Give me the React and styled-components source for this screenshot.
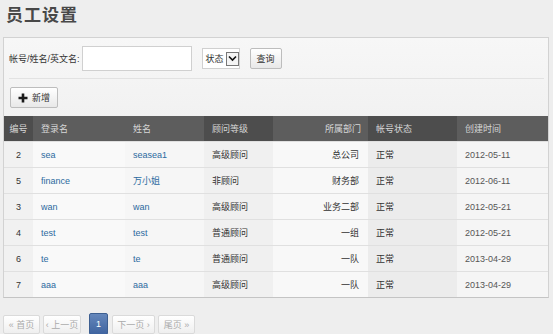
import React from 'react'
import styled, { createGlobalStyle } from 'styled-components'

const GlobalStyle = createGlobalStyle`
    body {
        margin: 0;
        background: #eeeeee;
        font-family: "Liberation Sans", "Noto Sans CJK SC", sans-serif;
        color: #333;
    }
`

const Page = styled.div`
    width: 553px;
    height: 334px;
    overflow: hidden;
`
const Title = styled.h1`
    margin: 0;
    height: 37px;
    box-sizing: border-box;
    padding: 3px 0 0 6px;
    font-family: "Noto Sans CJK SC", serif;
    font-size: 17px;
    line-height: 22px;
    font-weight: 700;
    letter-spacing: 1px;
    color: #484848;
`
const Panel = styled.div`
    margin-left: 3px;
    width: 546px;
    box-sizing: border-box;
    border: 1px solid #d2d2d2;
    border-bottom-color: #c4c4c4;
    background: linear-gradient(#f7f7f7, #f1f1f1 80px);
`
const SearchRow = styled.div`
    display: flex;
    align-items: center;
    margin: 0 4px 0 5px;
    padding: 8px 0 7px;
    border-bottom: 1px solid #e2e2e2;
`
const Label = styled.span`
    font-size: 9px;
    color: #333;
    margin-right: 2px;
    white-space: nowrap;
`
const TextInput = styled.input`
    width: 110px;
    height: 25px;
    box-sizing: border-box;
    border: 1px solid #d0d0d0;
    background: #fff;
    margin-right: 10px;
    padding: 0 4px;
`
const FakeSelect = styled.div`
    display: flex;
    align-items: center;
    width: 38px;
    height: 21px;
    box-sizing: border-box;
    border: 1px solid #d0d0d0;
    background: #fff;
    padding-left: 3px;
    font-size: 9px;
    white-space: nowrap;
    margin-right: 10px;
`
const Arrow = styled.span`
    display: flex;
    align-items: center;
    justify-content: center;
    flex: none;
    width: 13px;
    height: 14px;
    box-sizing: border-box;
    border: 1px solid #777;
    margin-left: 2px;
    background: #f4f4f4;
`
const Button = styled.button`
    display: inline-flex;
    align-items: center;
    gap: 4px;
    height: 21px;
    box-sizing: border-box;
    padding: 0 ${(p) => p.$pad || 6}px;
    border: 1px solid #bdbdbd;
    border-radius: 2px;
    background: linear-gradient(#ffffff, #e8e8e8);
    font-family: "Liberation Sans", "Noto Sans CJK SC", sans-serif;
    font-size: 9px;
    color: #333;
    cursor: pointer;
`
const Toolbar = styled.div`
    padding: 8px 6px;
    display: flex;
`
const Table = styled.table`
    width: 544px;
    border-collapse: collapse;
    table-layout: fixed;
    font-size: 9px;
`
const Th = styled.th`
    height: 25px;
    padding: 0 ${(p) => (p.$align === 'right' ? '7px' : '0')} 0 ${(p) => (p.$align === 'center' ? '0' : '8px')};
    text-align: ${(p) => p.$align || 'left'};
    font-weight: normal;
    color: #d6d6d6;
    background: ${(p) => (p.$dark ? '#4d4d4d' : '#5d5d5d')};
    font-size: 9px;
`
const Td = styled.td`
    height: 25px;
    padding: 0 ${(p) => (p.$align === 'right' ? '9px' : '0')} 0 ${(p) => (p.$align === 'center' ? '0' : '8px')};
    text-align: ${(p) => p.$align || 'left'};
    border-top: 1px solid #e0e0e0;
    background: ${(p) => p.$bg || '#f8f8f8'};
    color: ${(p) => (p.$muted ? '#555' : '#333')};
    white-space: nowrap;
`
const Link = styled.a`
    color: #2c6aa0;
    text-decoration: none;
    font-size: 9px;
`
const Pager = styled.div`
    display: flex;
    align-items: center;
    gap: 3px;
    padding: 15px 0 0 3px;
`
const PageBtn = styled.span`
    display: inline-flex;
    align-items: center;
    justify-content: center;
    box-sizing: border-box;
    width: ${(p) => p.$w}px;
    height: ${(p) => (p.$active ? 22 : 19)}px;
    margin-left: ${(p) => p.$ml || 0}px;
    border: 1px solid ${(p) => (p.$active ? '#3d5f91' : '#dadada')};
    border-radius: 2px;
    background: ${(p) => (p.$active ? 'linear-gradient(#6587bb, #3f64a0)' : 'linear-gradient(#ffffff, #efefef)')};
    color: ${(p) => (p.$active ? '#fff' : '#aaa')};
    font-size: 9px;
`

const columns = [
    { title: '编号', w: 29, align: 'center', dark: true, bg: '#f1f1f1' },
    { title: '登录名', w: 92, bg: '#f9f9f9' },
    { title: '姓名', w: 79, bg: '#f6f6f6' },
    { title: '顾问等级', w: 69, dark: true, bg: '#f0f0f0' },
    { title: '所属部门', w: 95, align: 'right', bg: '#f8f8f8' },
    { title: '帐号状态', w: 89, dark: true, bg: '#ececec' },
    { title: '创建时间', w: 91, bg: '#f5f5f5' },
]

const rows = [
    ['2', 'sea', 'seasea1', '高级顾问', '总公司', '正常', '2012-05-11'],
    ['5', 'finance', '万小姐', '非顾问', '财务部', '正常', '2012-06-11'],
    ['3', 'wan', 'wan', '高级顾问', '业务二部', '正常', '2012-05-21'],
    ['4', 'test', 'test', '普通顾问', '一组', '正常', '2012-05-21'],
    ['6', 'te', 'te', '普通顾问', '一队', '正常', '2013-04-29'],
    ['7', 'aaa', 'aaa', '高级顾问', '一队', '正常', '2013-04-29'],
]

const App = () => {
    return (
        <Page>
            <GlobalStyle />
            <Title>员工设置</Title>
            <Panel>
                <SearchRow>
                    <Label>帐号/姓名/英文名:</Label>
                    <TextInput />
                    <FakeSelect>
                        状态
                        <Arrow>
                            <svg width="9" height="7" viewBox="0 0 9 7">
                                <path d="M1 1.5 L4.5 5 L8 1.5" fill="none" stroke="#111" strokeWidth="1.6" />
                            </svg>
                        </Arrow>
                    </FakeSelect>
                    <Button $pad={6}>查询</Button>
                </SearchRow>
                <Toolbar>
                    <Button $pad={7}>
                        <svg width="10" height="10" viewBox="0 0 10 10">
                            <path d="M5 0.5 V9.5 M0.5 5 H9.5" stroke="#1a1a1a" strokeWidth="2.6" />
                        </svg>
                        新增
                    </Button>
                </Toolbar>
                <Table>
                    <colgroup>
                        {columns.map((c) => (
                            <col key={c.title} style={{ width: c.w }} />
                        ))}
                    </colgroup>
                    <thead>
                        <tr>
                            {columns.map((c) => (
                                <Th key={c.title} $align={c.align} $dark={c.dark}>
                                    {c.title}
                                </Th>
                            ))}
                        </tr>
                    </thead>
                    <tbody>
                        {rows.map((r) => (
                            <tr key={r[0]}>
                                {r.map((v, i) => (
                                    <Td key={i} $align={columns[i].align} $bg={columns[i].bg} $muted={i === 6}>
                                        {i === 1 || i === 2 ? <Link>{v}</Link> : v}
                                    </Td>
                                ))}
                            </tr>
                        ))}
                    </tbody>
                </Table>
            </Panel>
            <Pager>
                <PageBtn $w={37}>« 首页</PageBtn>
                <PageBtn $w={38}>‹ 上一页</PageBtn>
                <PageBtn $w={19} $ml={5} $active>1</PageBtn>
                <PageBtn $w={43} $ml={1}>下一页 ›</PageBtn>
                <PageBtn $w={37}>尾页 »</PageBtn>
            </Pager>
        </Page>
    )
}

export default App
